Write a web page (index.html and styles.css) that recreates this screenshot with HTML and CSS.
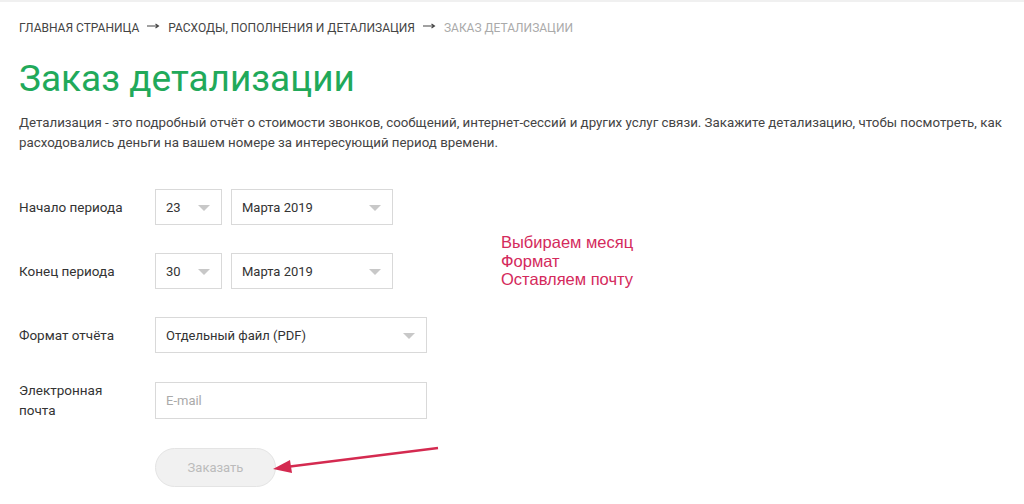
FILE: index.html
```html
<!DOCTYPE html>
<html lang="ru">
<head>
    <meta charset="UTF-8">
    <title>Заказ детализации</title>
    <link rel="stylesheet" href="styles.css">
</head>
<body>
    <div class="page">
        <div class="crumbs">
            <span>Главная страница</span>
            <svg class="arrow" width="13" height="8" viewBox="0 0 13 8"><path d="M0 4H11M8.5 2L11.5 4L8.5 6" stroke="#444" stroke-width="1.1" fill="none"/></svg>
            <span>Расходы, пополнения и детализация</span>
            <svg class="arrow" width="13" height="8" viewBox="0 0 13 8"><path d="M0 4H11M8.5 2L11.5 4L8.5 6" stroke="#444" stroke-width="1.1" fill="none"/></svg>
            <span class="current">Заказ детализации</span>
        </div>
        <h1 class="title">Заказ детализации</h1>
        <p class="intro">Детализация - это подробный отчёт о стоимости звонков, сообщений, интернет-сессий и других услуг связи. Закажите детализацию, чтобы посмотреть, как расходовались деньги на вашем номере за интересующий период времени.</p>

        <div class="form">
            <div class="row">
                <div class="label">Начало периода</div>
                <div class="select day">23<span class="caret"></span></div>
                <div class="select month">Марта 2019<span class="caret"></span></div>
            </div>
            <div class="row">
                <div class="label">Конец периода</div>
                <div class="select day">30<span class="caret"></span></div>
                <div class="select month">Марта 2019<span class="caret"></span></div>
            </div>
            <div class="row">
                <div class="label">Формат отчёта</div>
                <div class="select wide">Отдельный файл (PDF)<span class="caret"></span></div>
            </div>
            <div class="row row_email">
                <div class="label">Электронная<br>почта</div>
                <div class="input wide">E-mail</div>
            </div>
            <div class="row row_btn">
                <div class="label"></div>
                <button class="order_btn">Заказать</button>
            </div>
        </div>

        <div class="note">Выбираем месяц<br>Формат<br>Оставляем почту</div>
        <svg class="pointer" width="170" height="30" viewBox="0 0 170 30">
            <line x1="166" y1="2" x2="14" y2="21" stroke="#d42a50" stroke-width="2.5"/>
            <polygon points="1,23 18,14 20,27" fill="#d42a50"/>
        </svg>
    </div>
</body>
</html>
```

FILE: styles.css
```css
body {
    margin: 0;
    background: #fff;
    font-family: Roboto, "Liberation Sans", sans-serif;
    color: #333;
}
.page {
    position: relative;
    height: 504px;
    padding: 0 19px;
    border-top: 2px solid #f0f0f0;
    box-sizing: border-box;
}
.crumbs {
    padding-top: 19px;
    font-size: 12px;
    line-height: 14px;
    text-transform: uppercase;
    color: #444;
}
.crumbs .arrow {
    margin: 0 5px 2px 5px;
}
.crumbs .current {
    color: #aaa;
}
.title {
    margin: 22px 0 0 0;
    font-size: 37px;
    line-height: 44px;
    font-weight: 400;
    color: #21a95a;
}
.intro {
    margin: 12px 0 0 0;
    font-size: 13.3px;
    line-height: 20px;
    color: #444;
}
.form {
    margin-top: 36px;
    display: flex;
    flex-direction: column;
    gap: 28px;
}
.row {
    height: 36px;
    display: flex;
    align-items: center;
    gap: 9px;
}
.row_email {
    margin-top: 1px;
}
.row_btn {
    margin-top: 3px;
}
.label {
    width: 127px;
    flex-shrink: 0;
    font-size: 13.5px;
    line-height: 20px;
    color: #333;
}
.select, .input {
    position: relative;
    height: 36px;
    box-sizing: border-box;
    border: 1px solid #d9d9d9;
    padding: 0 10px;
    display: flex;
    align-items: center;
    font-size: 13px;
    color: #333;
}
.day {
    width: 67px;
}
.month {
    width: 162px;
}
.wide {
    width: 272px;
}
.input {
    height: 37px;
    color: #aaa;
}
.caret {
    position: absolute;
    right: 11px;
    top: 15px;
    width: 0;
    height: 0;
    border-left: 6px solid transparent;
    border-right: 6px solid transparent;
    border-top: 6px solid #c8c8c8;
}
.order_btn {
    width: 121px;
    height: 39px;
    flex-shrink: 0;
    border: 1px solid #e4e4e4;
    border-radius: 20px;
    background: #f1f1f1;
    font-family: Roboto, "Liberation Sans", sans-serif;
    font-size: 13px;
    color: #bbb;
}
.note {
    position: absolute;
    left: 501px;
    top: 231px;
    font-family: "Liberation Sans", Arial, sans-serif;
    font-size: 16.5px;
    line-height: 18.5px;
    color: #d42a5c;
}
.pointer {
    position: absolute;
    left: 272px;
    top: 444px;
}
```
